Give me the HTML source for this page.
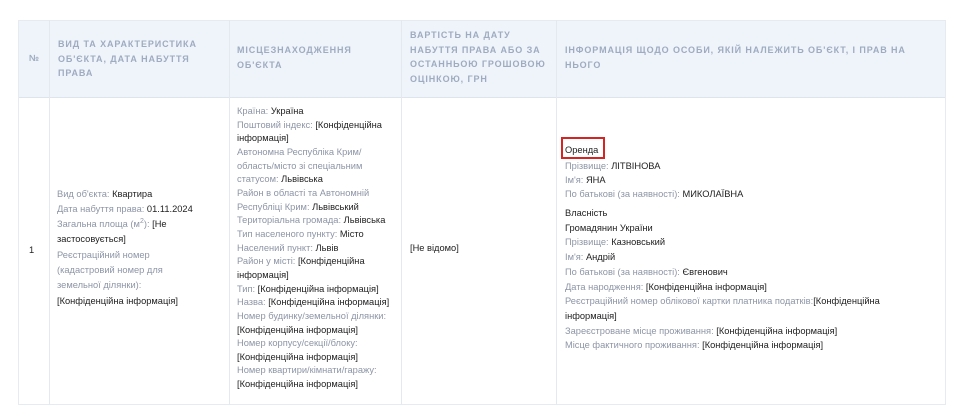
<!DOCTYPE html>
<html><head><meta charset="utf-8"><style>
body{margin:0;width:960px;height:419px;background:#fff;position:relative;overflow:hidden;font-family:"Liberation Sans",sans-serif}
.tb{position:absolute;left:18px;top:20px;width:928px;height:385px;border:1px solid #e6ebf1;box-sizing:border-box}
.hd{position:absolute;left:18px;top:20px;width:928px;height:77px;background:#eef4fa;border-bottom:1px solid #dde4ec}
.v{position:absolute;width:1px;background:#e4e9ef;top:20px;height:385px}
.h{position:absolute;font-size:9px;font-weight:bold;color:#9fabc0;letter-spacing:0.9px;line-height:14.5px;white-space:nowrap}
.t{position:absolute;font-size:9.3px;line-height:14px;color:#222;white-space:nowrap}
.l{color:#8d95a6}
.box{position:absolute;left:561px;top:137px;width:44px;height:22px;border:2.5px solid #d42424;box-sizing:border-box}
</style></head><body>
<div class="hd"></div>
<div class="tb"></div>
<div class="v" style="left:49px"></div>
<div class="v" style="left:229px"></div>
<div class="v" style="left:401px"></div>
<div class="v" style="left:556px"></div>
<div class="h" style="left:29px;top:51px">№</div>
<div class="h" style="left:58px;top:37px">ВИД ТА ХАРАКТЕРИСТИКА<br>ОБ'ЄКТА, ДАТА НАБУТТЯ<br>ПРАВА</div>
<div class="h" style="left:237px;top:43px">МІСЦЕЗНАХОДЖЕННЯ<br>ОБ'ЄКТА</div>
<div class="h" style="left:410px;top:28px">ВАРТІСТЬ НА ДАТУ<br>НАБУТТЯ ПРАВА АБО ЗА<br>ОСТАННЬОЮ ГРОШОВОЮ<br>ОЦІНКОЮ, ГРН</div>
<div class="h" style="left:565px;top:43px">ІНФОРМАЦІЯ ЩОДО ОСОБИ, ЯКІЙ НАЛЕЖИТЬ ОБ'ЄКТ, І ПРАВ НА<br>НЬОГО</div>
<div class="t" style="left:29px;top:243px">1</div>
<div class="t" style="left:57px;top:187px;line-height:15px"><span class="l">Вид об'єкта:</span> Квартира<br><span class="l">Дата набуття права:</span> 01.11.2024<br><span class="l">Загальна площа (м<sup style="font-size:7px;line-height:0">2</sup>):</span> [Не<br>застосовується]</div>
<div class="t" style="left:57px;top:248px;line-height:15.2px"><span class="l">Реєстраційний номер<br>(кадастровий номер для<br>земельної ділянки):</span><br>[Конфіденційна інформація]</div>
<div class="t" style="left:237px;top:105px;line-height:13.65px"><span class="l">Країна:</span> Україна<br><span class="l">Поштовий індекс:</span> [Конфіденційна<br>інформація]<br><span class="l">Автономна Республіка Крим/<br>область/місто зі спеціальним<br>статусом:</span> Львівська<br><span class="l">Район в області та Автономній<br>Республіці Крим:</span> Львівський<br><span class="l">Територіальна громада:</span> Львівська<br><span class="l">Тип населеного пункту:</span> Місто<br><span class="l">Населений пункт:</span> Львів<br><span class="l">Район у місті:</span> [Конфіденційна<br>інформація]<br><span class="l">Тип:</span> [Конфіденційна інформація]<br><span class="l">Назва:</span> [Конфіденційна інформація]<br><span class="l">Номер будинку/земельної ділянки:</span><br>[Конфіденційна інформація]<br><span class="l">Номер корпусу/секції/блоку:</span><br>[Конфіденційна інформація]<br><span class="l">Номер квартири/кімнати/гаражу:</span><br>[Конфіденційна інформація]</div>
<div class="t" style="left:410px;top:241px">[Не відомо]</div>
<div class="box"></div>
<div class="t" style="left:565px;top:143px">Оренда</div>
<div class="t" style="left:565px;top:159px"><span class="l">Прізвище:</span> ЛІТВІНОВА<br><span class="l">Ім'я:</span> ЯНА<br><span class="l">По батькові (за наявності):</span> МИКОЛАЇВНА</div>
<div class="t" style="left:565px;top:206px;line-height:14.7px">Власність<br>Громадянин України<br><span class="l">Прізвище:</span> Казновський<br><span class="l">Ім'я:</span> Андрій<br><span class="l">По батькові (за наявності):</span> Євгенович<br><span class="l">Дата народження:</span> [Конфіденційна інформація]<br><span class="l">Реєстраційний номер облікової картки платника податків:</span>[Конфіденційна<br>інформація]<br><span class="l">Зареєстроване місце проживання:</span> [Конфіденційна інформація]<br><span class="l">Місце фактичного проживання:</span> [Конфіденційна інформація]</div>
</body></html>
